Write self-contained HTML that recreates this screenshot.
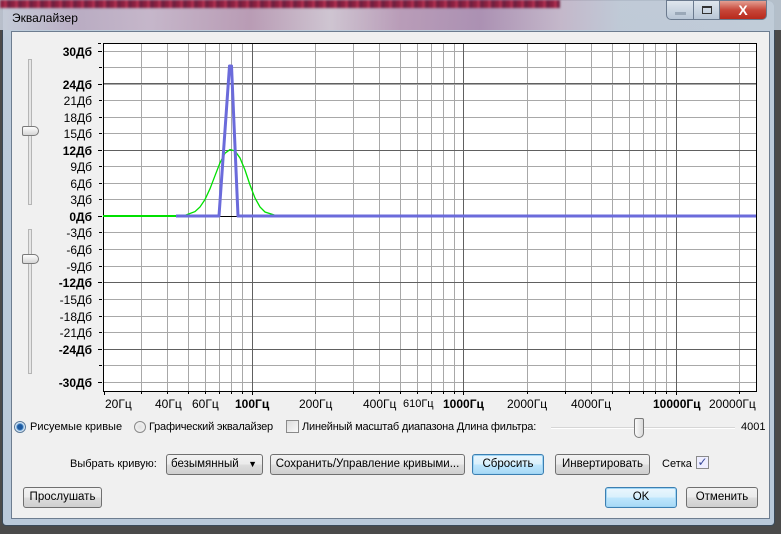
<!DOCTYPE html>
<html><head><meta charset="utf-8"><style>
*{margin:0;padding:0;box-sizing:border-box}
body{width:781px;height:534px;overflow:hidden;background:#4a4a4a;font-family:"Liberation Sans",sans-serif;font-size:12px;color:#000;position:relative}
.frame{position:absolute;left:2px;top:0;width:773px;height:526px;border-radius:7px 7px 4px 4px;background:linear-gradient(180deg,#c4cfdc 0,#bccbdb 40px,#b9c9da 100%);border:1px solid #3a4a5a}
.tb{position:absolute;left:0;top:0;width:781px;height:30px;background:linear-gradient(90deg,#c5ccd8 0,#b9a9c0 80px,#c6b4c8 150px,#b896b0 250px,#d0c4d0 330px,#b897b4 400px,#a98aae 480px,#c4b5c8 560px,#bfc9d6 620px,#c0ccd8 100%);opacity:.9}
.tbstripe{position:absolute;left:0;top:0;width:560px;height:8px;background:repeating-linear-gradient(90deg,#8a2040 0 4px,#b03050 4px 7px,#702040 7px 11px);filter:blur(1px)}
.title{position:absolute;left:12px;top:11px;font-size:12px;color:#000}
.client{position:absolute;left:11px;top:31px;width:759px;height:488px;background:#f0f0f0;border:1px solid #6d7d90}
.abs{position:absolute;white-space:nowrap}
.btn{position:absolute;height:21px;border:1px solid #707070;border-radius:3px;background:linear-gradient(#f2f2f2,#ebebeb 50%,#dddddd 51%,#cfcfcf);text-align:center;line-height:19px;font-size:11.5px;white-space:nowrap}
.btn.def{border-color:#3c7fb1;background:linear-gradient(#eaf6fd,#d9f0fc 50%,#bee6fd 51%,#a7d9f5);box-shadow:inset 0 0 0 1px #9fd5f5}
.lbl{position:absolute;font-size:11px;line-height:14px;white-space:nowrap}
.cap{position:absolute;top:0;height:20px;border:1px solid #6b7a8e}
</style></head><body>
<div class="frame"></div>
<div class="tb"></div><div class="tbstripe"></div>
<div class="title">Эквалайзер</div>
<div class="cap" style="left:666px;width:28px;border-radius:0 0 0 5px;background:linear-gradient(#dfe6ee,#b8c6d6)"><div style="position:absolute;left:8px;top:11px;width:11px;height:3px;background:#9aa8b8"></div></div>
<div class="cap" style="left:693px;width:27px;background:linear-gradient(#dfe6ee,#b8c6d6)"><div style="position:absolute;left:8px;top:5px;width:10px;height:8px;border:1px solid #333;border-top-width:2px"></div></div>
<div class="cap" style="left:719px;width:48px;border-radius:0 0 5px 0;background:linear-gradient(#e4a093,#c7473a 50%,#b8291c)"><div style="position:absolute;left:0;top:1px;width:46px;text-align:center;color:#fff;font-weight:bold;font-size:14px;line-height:16px">X</div></div>

<div class="client"></div>

<div class="abs" style="left:28px;top:59px;width:4px;height:146px;background:#e6e6e6;border:1px solid #b5b5b5"></div>
<div class="abs" style="left:22px;top:126px;width:17px;height:10px;border:1px solid #7a7a7a;border-radius:2px 5px 5px 2px;background:linear-gradient(#fdfdfd,#d6d6d6)"></div>
<div class="abs" style="left:28px;top:229px;width:4px;height:145px;background:#e6e6e6;border:1px solid #b5b5b5"></div>
<div class="abs" style="left:22px;top:254px;width:17px;height:10px;border:1px solid #7a7a7a;border-radius:2px 5px 5px 2px;background:linear-gradient(#fdfdfd,#d6d6d6)"></div>

<svg class="abs" style="left:0;top:0" width="781" height="534" font-family="Liberation Sans, sans-serif">
<rect x="103" y="43" width="653" height="348" fill="#fff"/>
<g stroke="#a8a8a8" stroke-width="1">
<path d="M103 67.5H756M103 84.5H756M103 100.5H756M103 117.5H756M103 133.5H756M103 166.5H756M103 183.5H756M103 199.5H756M103 232.5H756M103 249.5H756M103 266.5H756M103 282.5H756M103 299.5H756M103 316.5H756M103 332.5H756M103 349.5H756M103 365.5H756M103 51.5H756M103 382.5H756"/>
<path d="M141.5 43V391M167.5 43V391M188.5 43V391M205.5 43V391M219.5 43V391M231.5 43V391M242.5 43V391M315.5 43V391M353.5 43V391M379.5 43V391M400.5 43V391M417.5 43V391M431.5 43V391M443.5 43V391M454.5 43V391M527.5 43V391M565.5 43V391M591.5 43V391M612.5 43V391M629.5 43V391M643.5 43V391M655.5 43V391M666.5 43V391M739.5 43V391"/>
</g>
<g stroke="#606060"><path d="M103 83.5H756M103 150.5H756M103 282.5H756M103 349.5H756M252.5 43V391M463.5 43V391M676.5 43V391"/></g>
<path d="M103 216.5H756" stroke="#000"/>
<rect x="103.5" y="43.5" width="653" height="348" fill="none" stroke="#000"/>
<g stroke="#000"><path d="M98 51.5h4M99 67.5h3M98 84.5h4M99 100.5h3M99 117.5h3M99 133.5h3M98 150.5h4M99 166.5h3M99 183.5h3M99 199.5h3M98 216.5h4M99 232.5h3M99 249.5h3M99 266.5h3M98 282.5h4M99 299.5h3M99 316.5h3M99 332.5h3M98 349.5h4M99 365.5h3M98 382.5h4M98 43.5h3"/>
<path d="M104.5 391v4M141.5 391v3M167.5 391v3M188.5 391v3M205.5 391v3M219.5 391v3M231.5 391v3M242.5 391v3M252.5 391v4M315.5 391v3M353.5 391v3M379.5 391v3M400.5 391v3M417.5 391v3M431.5 391v3M443.5 391v3M454.5 391v3M463.5 391v4M527.5 391v3M565.5 391v3M591.5 391v3M612.5 391v3M629.5 391v3M643.5 391v3M655.5 391v3M666.5 391v3M676.5 391v4M739.5 391v3"/></g>
<polyline fill="none" stroke="#00e000" stroke-width="1.3" points="103,216 175,216 185,215.3 195,211.6 200,207 205,199.5 210,188.7 215,175.7 220,162.8 225,153.2 230,149.6 235,151 240,158 245,170 250,185 255,198 260,207 265,212 275,215.3 280,216"/>
<polyline fill="none" stroke="#00e000" stroke-width="2" points="103,216 176,216"/>
<polyline fill="none" stroke="#6b6bdb" stroke-width="3" stroke-linejoin="round" points="176,216 219,216 229.5,66 231.5,66 238,216 756,216"/>
<g text-anchor="end" font-size="12">
<text x="92" y="56" font-weight="bold">30Дб</text>
<text x="92" y="89" font-weight="bold">24Дб</text>
<text x="92" y="105">21Дб</text>
<text x="92" y="122">18Дб</text>
<text x="92" y="138">15Дб</text>
<text x="92" y="155" font-weight="bold">12Дб</text>
<text x="92" y="171">9Дб</text>
<text x="92" y="188">6Дб</text>
<text x="92" y="204">3Дб</text>
<text x="92" y="221" font-weight="bold">0Дб</text>
<text x="92" y="237">-3Дб</text>
<text x="92" y="254">-6Дб</text>
<text x="92" y="271">-9Дб</text>
<text x="92" y="287" font-weight="bold">-12Дб</text>
<text x="92" y="304">-15Дб</text>
<text x="92" y="321">-18Дб</text>
<text x="92" y="337">-21Дб</text>
<text x="92" y="354" font-weight="bold">-24Дб</text>
<text x="92" y="387" font-weight="bold">-30Дб</text>
</g>
<g font-size="12">
<text x="105" y="408">20Гц</text>
<text x="155" y="408">40Гц</text>
<text x="192" y="408">60Гц</text>
<text x="235" y="408" font-weight="bold">100Гц</text>
<text x="299" y="408">200Гц</text>
<text x="363" y="408">400Гц</text>
<text x="403" y="407" font-size="11">610Гц</text>
<text x="443" y="408" font-weight="bold">1000Гц</text>
<text x="507" y="408">2000Гц</text>
<text x="571" y="408">4000Гц</text>
<text x="653" y="408" font-weight="bold">10000Гц</text>
<text x="709" y="408">20000Гц</text>
</g>
</svg>

<div class="abs" style="left:14px;top:421px;width:12px;height:12px;border-radius:50%;border:1px solid #5a7a9a;background:radial-gradient(circle,#1d5aa0 0 2.5px,#7ab0e0 3.5px,#e8f0f8 4.5px)"></div>
<div class="lbl" style="left:30px;top:420px">Рисуемые кривые</div>
<div class="abs" style="left:134px;top:421px;width:12px;height:12px;border-radius:50%;border:1px solid #8a8a8a;background:radial-gradient(circle,#e0e0e0,#f8f8f8)"></div>
<div class="lbl" style="left:149px;top:420px;letter-spacing:-0.2px">Графический эквалайзер</div>
<div class="abs" style="left:286px;top:420px;width:13px;height:13px;border:1px solid #8a8a8a;background:linear-gradient(135deg,#dcdcdc,#fafafa)"></div>
<div class="lbl" style="left:302px;top:420px;letter-spacing:-0.2px">Линейный масштаб диапазона Длина фильтра:</div>
<div class="abs" style="left:551px;top:427px;width:184px;height:2px;background:#d6d6d6;border-bottom:1px solid #fff"></div>
<div class="abs" style="left:634px;top:418px;width:10px;height:20px;border:1px solid #7a7a7a;border-radius:2px 2px 5px 5px;background:linear-gradient(90deg,#fafafa,#dadada)"></div>
<div class="lbl" style="left:741px;top:420px">4001</div>

<div class="lbl" style="left:70px;top:457px">Выбрать кривую:</div>
<div class="btn" style="left:166px;top:454px;width:97px;text-align:left;padding-left:4px">безымянный<span style="position:absolute;right:5px;top:0;font-size:9px">▼</span></div>
<div class="btn" style="left:270px;top:454px;width:195px">Сохранить/Управление кривыми...</div>
<div class="btn def" style="left:472px;top:454px;width:72px">Сбросить</div>
<div class="btn" style="left:555px;top:454px;width:95px">Инвертировать</div>
<div class="lbl" style="left:662px;top:457px">Сетка</div>
<div class="abs" style="left:696px;top:456px;width:13px;height:13px;border:1px solid #8a8a8a;background:#eef;color:#3a4a9a;font-size:12px;line-height:11px;text-align:center">✓</div>

<div class="btn" style="left:23px;top:487px;width:79px">Прослушать</div>
<div class="btn def" style="left:605px;top:487px;width:72px">OK</div>
<div class="btn" style="left:686px;top:487px;width:72px">Отменить</div>
</body></html>
